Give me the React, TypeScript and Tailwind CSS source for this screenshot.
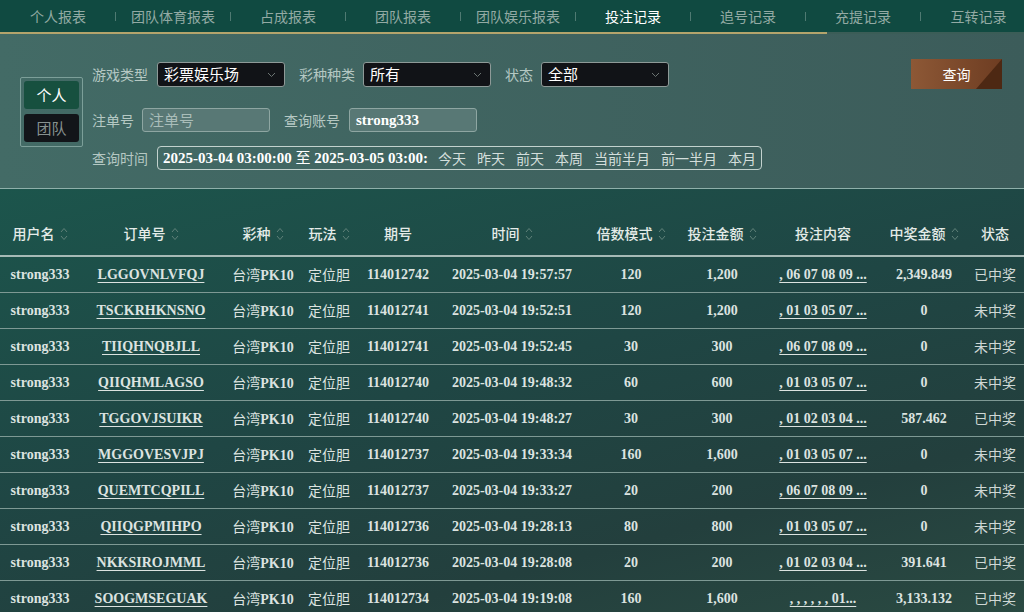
import React from 'react';

const tabs = ['个人报表', '团队体育报表', '占成报表', '团队报表', '团队娱乐报表', '投注记录', '追号记录', '充提记录', '互转记录'];

type Row = {
  order: string;
  issue: string;
  time: string;
  multi: string;
  amount: string;
  content: string;
  win: string;
  status: string;
};

const rows: Row[] = [
  { order: 'LGGOVNLVFQJ', issue: '114012742', time: '2025-03-04 19:57:57', multi: '120', amount: '1,200', content: ', 06 07 08 09 ...', win: '2,349.849', status: '已中奖' },
  { order: 'TSCKRHKNSNO', issue: '114012741', time: '2025-03-04 19:52:51', multi: '120', amount: '1,200', content: ', 01 03 05 07 ...', win: '0', status: '未中奖' },
  { order: 'TIIQHNQBJLL', issue: '114012741', time: '2025-03-04 19:52:45', multi: '30', amount: '300', content: ', 06 07 08 09 ...', win: '0', status: '未中奖' },
  { order: 'QIIQHMLAGSO', issue: '114012740', time: '2025-03-04 19:48:32', multi: '60', amount: '600', content: ', 01 03 05 07 ...', win: '0', status: '未中奖' },
  { order: 'TGGOVJSUIKR', issue: '114012740', time: '2025-03-04 19:48:27', multi: '30', amount: '300', content: ', 01 02 03 04 ...', win: '587.462', status: '已中奖' },
  { order: 'MGGOVESVJPJ', issue: '114012737', time: '2025-03-04 19:33:34', multi: '160', amount: '1,600', content: ', 01 03 05 07 ...', win: '0', status: '未中奖' },
  { order: 'QUEMTCQPILL', issue: '114012737', time: '2025-03-04 19:33:27', multi: '20', amount: '200', content: ', 06 07 08 09 ...', win: '0', status: '未中奖' },
  { order: 'QIIQGPMIHPO', issue: '114012736', time: '2025-03-04 19:28:13', multi: '80', amount: '800', content: ', 01 03 05 07 ...', win: '0', status: '未中奖' },
  { order: 'NKKSIROJMML', issue: '114012736', time: '2025-03-04 19:28:08', multi: '20', amount: '200', content: ', 01 02 03 04 ...', win: '391.641', status: '已中奖' },
  { order: 'SOOGMSEGUAK', issue: '114012734', time: '2025-03-04 19:19:08', multi: '160', amount: '1,600', content: ', , , , , , 01...', win: '3,133.132', status: '已中奖' },
];

const headers: [string, boolean][] = [
  ['用户名', true],
  ['订单号', true],
  ['彩种', true],
  ['玩法', true],
  ['期号', false],
  ['时间', true],
  ['倍数模式', true],
  ['投注金额', true],
  ['投注内容', false],
  ['中奖金额', true],
  ['状态', false],
];

const cols = 'grid grid-cols-[80px_142px_82px_50px_88px_140px_98px_84px_118px_84px_58px]';

const SortIcon = () => (
  <svg width="8" height="16" viewBox="0 0 8 16" fill="none" stroke="#5f8179" strokeWidth="1">
    <path d="M1 6 L4 2.5 L7 6" />
    <path d="M1 10 L4 13.5 L7 10" />
  </svg>
);

const Chevron = () => (
  <svg width="9" height="6" viewBox="0 0 9 6" fill="none" stroke="#6b7472" strokeWidth="1">
    <path d="M1 1 L4.5 4.5 L8 1" />
  </svg>
);

const Select = ({ value }: { value: string }) => (
  <div className="flex h-[25px] w-[128px] items-center justify-between rounded-[3px] border border-[#8e9a98] bg-[#111317] pl-[6px] pr-[8px] text-[15px] text-white">
    <span>{value}</span>
    <Chevron />
  </div>
);

const App: React.FC = () => {
  return (
    <div className="h-[612px] w-[1024px] overflow-hidden font-['Noto_Sans_CJK_SC','Liberation_Sans',sans-serif]">
      {/* tab bar */}
      <div className="relative h-[34px] bg-[#104a41]">
        <div className="flex h-[32px] pl-[1px]">
          {tabs.map((t, i) => (
            <div key={t} className="flex w-[115px] shrink-0 items-center">
              <div className={`flex-1 text-center text-[14px] ${i === 5 ? 'text-white' : 'text-[#93aaa4]'}`}>{t}</div>
              {i < tabs.length - 1 && <div className="h-[9px] w-px bg-[#4f7a72]" />}
            </div>
          ))}
        </div>
        <div className="flex h-[2px]">
          <div className="w-[827px] bg-[#b4a46c]" />
          <div className="flex-1 bg-[#3b5d57]" />
        </div>
      </div>

      {/* filter area */}
      <div className="flex h-[155px] border-b border-[#8fb0aa] bg-gradient-to-r from-[#436b66] to-[#3c5c5a] pt-[28px]">
        <div className="ml-[20px] mt-[15px] flex h-[70px] w-[63px] flex-col gap-[5px] rounded-[2px] border border-[#7c9f99] p-[3px]">
          <div className="flex h-[28px] items-center justify-center rounded-[3px] bg-[#17503f] text-[15px] text-white">个人</div>
          <div className="flex h-[28px] items-center justify-center rounded-[3px] bg-[#121519] text-[15px] text-[#87918f]">团队</div>
        </div>

        <div className="ml-[9px] flex flex-col text-[14px] text-[#b5c8c3]">
          <div className="flex h-[25px] items-center">
            <span className="mr-[9px]">游戏类型</span>
            <Select value="彩票娱乐场" />
            <span className="ml-[14px] mr-[8px]">彩种种类</span>
            <Select value="所有" />
            <span className="ml-[14px] mr-[8px]">状态</span>
            <Select value="全部" />
          </div>
          <div className="mt-[21px] flex h-[24px] items-center">
            <span className="mr-[8px]">注单号</span>
            <div className="flex h-[24px] w-[128px] items-center rounded-[3px] border border-[#8ea6a2] bg-[#587875] pl-[6px] text-[15px] text-[#a9bdb9]">注单号</div>
            <span className="ml-[14px] mr-[9px]">查询账号</span>
            <div className="flex h-[24px] w-[128px] items-center rounded-[3px] border border-[#8ea6a2] bg-[#587875] pl-[6px] font-['Liberation_Serif',serif] text-[15px] font-bold text-white">strong333</div>
          </div>
          <div className="mt-[14px] flex h-[24px] items-center">
            <span className="mr-[9px]">查询时间</span>
            <div className="flex h-[24px] w-[605px] items-center rounded-[4px] border border-[#c3d2ce] pl-[5px]">
              <div className="w-[265px] overflow-hidden whitespace-nowrap font-['Liberation_Serif','Noto_Sans_CJK_SC',serif] text-[15px] font-bold text-white">
                2025-03-04 03:00:00 <span className="font-normal">至</span> 2025-03-05 03:00:00
              </div>
              <div className="ml-[10px] flex gap-[11px] text-[14px] text-[#d3dedb]">
                {['今天', '昨天', '前天', '本周', '当前半月', '前一半月', '本月'].map((d) => (
                  <span key={d}>{d}</span>
                ))}
              </div>
            </div>
          </div>
        </div>

        <div className="ml-auto mr-[22px] mt-[-3px]">
          <div className="relative flex h-[30px] w-[91px] items-center justify-center overflow-hidden bg-gradient-to-r from-[#8d5836] to-[#6e3d22] text-[14px] text-white">
            <span className="absolute right-0 top-0 h-0 w-0 border-b-[30px] border-l-[26px] border-b-[#4d2813] border-l-transparent" />
            <span className="relative">查询</span>
          </div>
        </div>
      </div>

      {/* table */}
      <div className="h-[423px] bg-[linear-gradient(165deg,#1c554c_0%,#1f4644_45%,#233f3d_75%,#2a4a42_100%)]">
        <div className={`${cols} h-[68px] border-b-2 border-[#a6bab6]`}>
          {headers.map(([h, sort]) => (
            <div key={h} className="flex items-end justify-center gap-[5px] pb-[11px] text-[14px] font-medium text-[#e4ebe8]">
              <span>{h}</span>
              {sort && (
                <span className="mb-[2px]">
                  <SortIcon />
                </span>
              )}
            </div>
          ))}
        </div>
        {rows.map((r) => (
          <div
            key={r.order}
            className={`${cols} h-[36px] items-center border-b border-[#7e9994] font-['Liberation_Serif','Noto_Sans_CJK_SC',serif] text-[14px] font-bold text-[#dce3e0]`}
          >
            <div className="text-center">strong333</div>
            <div className="text-center underline underline-offset-[3px]">{r.order}</div>
            <div className="text-center">
              <span className="font-['Noto_Sans_CJK_SC',sans-serif] font-normal">台湾</span>PK10
            </div>
            <div className="text-center font-['Noto_Sans_CJK_SC',sans-serif] font-normal">定位胆</div>
            <div className="text-center">{r.issue}</div>
            <div className="text-center">{r.time}</div>
            <div className="text-center">{r.multi}</div>
            <div className="text-center">{r.amount}</div>
            <div className="text-center whitespace-pre underline underline-offset-[3px]">{r.content}</div>
            <div className="text-center">{r.win}</div>
            <div className="text-center font-['Noto_Sans_CJK_SC',sans-serif] font-normal text-[#cfd8d5]">{r.status}</div>
          </div>
        ))}
      </div>
    </div>
  );
};

export default App;
